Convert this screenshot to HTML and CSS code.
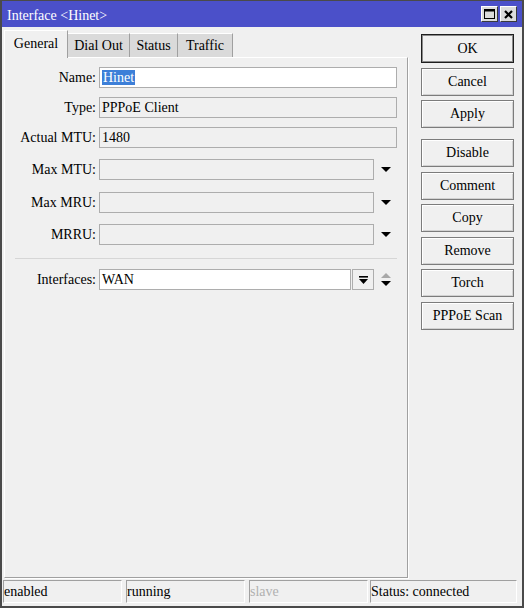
FILE: index.html
```html
<!DOCTYPE html>
<html>
<head>
<meta charset="utf-8">
<title>Interface &lt;Hinet&gt;</title>
<link rel="stylesheet" href="styles.css">
</head>
<body>
<div class="window">
  <div class="titlebar">
    <span class="title">Interface &lt;Hinet&gt;</span>
    <div class="title-buttons">
      <span class="tbtn">
        <svg width="11" height="10" viewBox="0 0 11 10"><rect x="0.5" y="0.5" width="10" height="9" fill="none" stroke="#000"/><rect x="0" y="0" width="11" height="2.5" fill="#000"/></svg>
      </span>
      <span class="tbtn">
        <svg width="9" height="9" viewBox="0 0 9 9"><path d="M1 1L8 8M8 1L1 8" stroke="#000" stroke-width="2.2"/></svg>
      </span>
    </div>
  </div>

  <div class="body">
    <div class="main">
      <div class="tabs">
        <span class="tab active tab-general">General</span>
        <span class="tab tab-dial">Dial Out</span>
        <span class="tab tab-status">Status</span>
        <span class="tab tab-traffic">Traffic</span>
      </div>

      <div class="panel">
        <div class="row">
          <span class="label">Name:</span>
          <div class="field white"><span class="sel">Hinet</span></div>
        </div>
        <div class="row gap-9">
          <span class="label">Type:</span>
          <div class="field">PPPoE Client</div>
        </div>
        <div class="row gap-9">
          <span class="label">Actual MTU:</span>
          <div class="field">1480</div>
        </div>
        <div class="row gap-11">
          <span class="label">Max MTU:</span>
          <div class="ctrl">
            <div class="field"></div>
            <span class="drop"><svg width="10" height="5" viewBox="0 0 10 5"><polygon points="0,0 10,0 5,5" fill="#000"/></svg></span>
          </div>
        </div>
        <div class="row gap-12">
          <span class="label">Max MRU:</span>
          <div class="ctrl">
            <div class="field"></div>
            <span class="drop"><svg width="10" height="5" viewBox="0 0 10 5"><polygon points="0,0 10,0 5,5" fill="#000"/></svg></span>
          </div>
        </div>
        <div class="row gap-11">
          <span class="label">MRRU:</span>
          <div class="ctrl">
            <div class="field"></div>
            <span class="drop"><svg width="10" height="5" viewBox="0 0 10 5"><polygon points="0,0 10,0 5,5" fill="#000"/></svg></span>
          </div>
        </div>

        <div class="separator"></div>

        <div class="row">
          <span class="label">Interfaces:</span>
          <div class="ctrl">
            <div class="field white">WAN</div>
            <span class="pick"><svg width="9" height="8" viewBox="0 0 9 8"><rect x="0" y="0" width="9" height="1.6" fill="#000"/><polygon points="0,3 9,3 4.5,8" fill="#000"/></svg></span>
            <span class="drop"><svg width="10" height="13" viewBox="0 0 10 13"><polygon points="5,0 10,5 0,5" fill="#a8a8a8"/><polygon points="0,8 10,8 5,13" fill="#000"/></svg></span>
          </div>
        </div>
      </div>
    </div>

    <div class="actions">
      <span class="btn default">OK</span>
      <span class="btn">Cancel</span>
      <span class="btn">Apply</span>
      <span class="btn spaced">Disable</span>
      <span class="btn">Comment</span>
      <span class="btn">Copy</span>
      <span class="btn">Remove</span>
      <span class="btn">Torch</span>
      <span class="btn">PPPoE Scan</span>
    </div>
  </div>

  <div class="statusbar">
    <span class="cell">enabled</span>
    <span class="cell">running</span>
    <span class="cell muted">slave</span>
    <span class="cell wide">Status: connected</span>
  </div>
</div>
</body>
</html>
```

FILE: styles.css
```css
* {
  box-sizing: border-box;
}

html,
body {
  margin: 0;
  padding: 0;
}

body {
  font: 14px "Liberation Serif", "Times New Roman", serif;
  color: #000;
  background: #f0f0f0;
}

/* window frame */
.window {
  width: 524px;
  height: 608px;
  border: 2px solid #4a4a4a;
  border-top-width: 1px;
  background: #f0f0f0;
  display: flex;
  flex-direction: column;
}

.titlebar {
  flex: none;
  height: 26px;
  background: #4b50c9;
  color: #fff;
  display: flex;
  align-items: flex-start;
  padding-left: 5px;
}

.title {
  flex: 1;
  line-height: 16px;
  margin-top: 7px;
}

.title-buttons {
  display: flex;
  gap: 2px;
  margin: 5px 5px 0 0;
}

.tbtn {
  width: 17px;
  height: 16px;
  background: #dcdcdc;
  border: 1px solid;
  border-color: #fff #3a3a3a #3a3a3a #fff;
  display: flex;
  align-items: center;
  justify-content: center;
}

/* content area */
.body {
  flex: 1;
  min-height: 0;
  display: flex;
  padding: 0 0 2px 2px;
}

.main {
  width: 404px;
  display: flex;
  flex-direction: column;
}

.tabs {
  flex: none;
  margin-top: 3px;
  height: 27px;
  display: flex;
  align-items: flex-end;
  position: relative;
  z-index: 1;
}

.tab {
  height: 24px;
  background: #dadada;
  border-top: 1px solid #fff;
  border-right: 1px solid #a0a0a0;
  display: flex;
  align-items: center;
  justify-content: center;
  white-space: nowrap;
}

.tab.active {
  height: 28px;
  margin-bottom: -1px;
  background: #f0f0f0;
  border-left: 1px solid #fff;
  padding-bottom: 2px;
}

.tab-general { width: 64px; }
.tab-dial { width: 62px; }
.tab-status { width: 48px; }
.tab-traffic { width: 55px; }

.panel {
  flex: 1;
  border-top: 1px solid #fff;
  border-left: 1px solid #fff;
  border-right: 1px solid #a0a0a0;
  border-bottom: 1px solid #a0a0a0;
  box-shadow: 1px 1px 0 #fff;
  padding: 9px 10px 0 0;
}

.row {
  display: grid;
  grid-template-columns: 91px 1fr;
  column-gap: 3px;
  height: 21px;
  align-items: center;
}

.gap-9 { margin-top: 9px; }
.gap-11 { margin-top: 11px; }
.gap-12 { margin-top: 12px; }

.label {
  text-align: right;
  white-space: nowrap;
}

.field {
  height: 21px;
  border: 1px solid #adadad;
  background: #f0f0f0;
  padding: 0 2px;
  line-height: 19px;
  white-space: nowrap;
  overflow: hidden;
}

.field.white {
  background: #fff;
}

.sel {
  background: #3d7fd8;
  color: #fff;
  padding: 0 1px;
}

.ctrl {
  display: flex;
  height: 21px;
}

.ctrl .field {
  flex: 1;
}

.drop {
  width: 23px;
  flex: none;
  display: flex;
  align-items: center;
  justify-content: center;
}

.pick {
  width: 22px;
  flex: none;
  margin-left: 1px;
  border: 1px solid #adadad;
  background: #f0f0f0;
  display: flex;
  align-items: center;
  justify-content: center;
}

.separator {
  height: 1px;
  background: #d6d6d6;
  margin: 13px 0 10px 10px;
}

/* button column */
.actions {
  width: 93px;
  margin: 7px 0 0 13px;
  display: flex;
  flex-direction: column;
  gap: 4.6px;
}

.btn {
  height: 28px;
  flex: none;
  border: 1px solid #7c7c7c;
  background: #f0f0f0;
  box-shadow: inset 1px 1px 0 #fff, inset -1px -1px 0 #d2d2d2;
  display: flex;
  align-items: center;
  justify-content: center;
  white-space: nowrap;
}

.btn.default {
  height: 29px;
  border-color: #1e1e1e;
  box-shadow: inset 0 0 0 1px #8a8a8a;
}

.btn.spaced {
  margin-top: 6.2px;
}

/* status bar */
.statusbar {
  flex: none;
  height: 23px;
  margin: 0 0 3px 1px;
  display: flex;
  gap: 4px;
}

.cell {
  width: 119px;
  height: 23px;
  border: 1px solid;
  border-color: #a0a0a0 #fff #fff #a0a0a0;
  line-height: 21px;
  white-space: nowrap;
  overflow: hidden;
}

.cell.muted {
  color: #b0b0b0;
}

.cell.wide {
  width: 147px;
  margin-left: -2px;
}
```
